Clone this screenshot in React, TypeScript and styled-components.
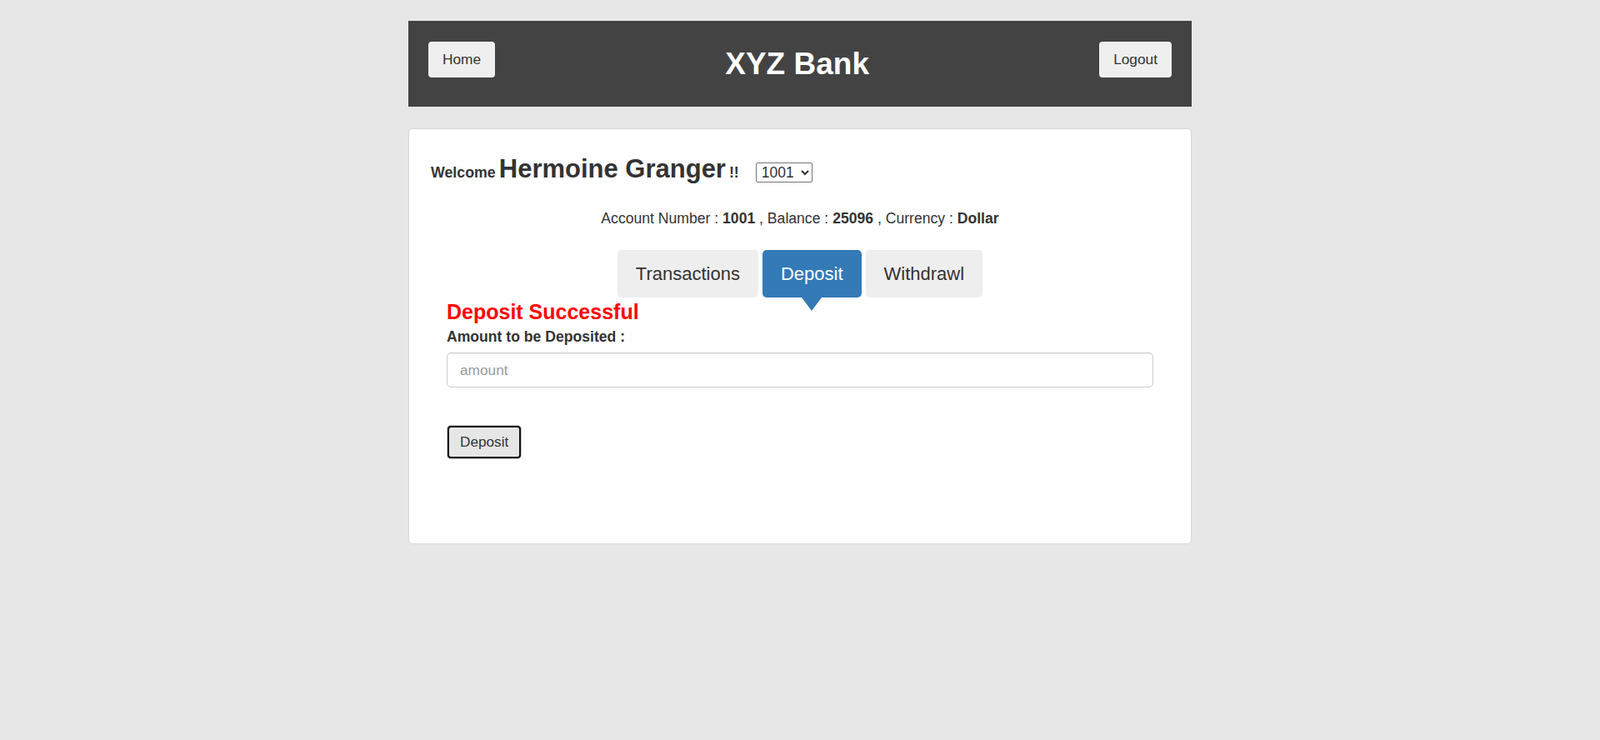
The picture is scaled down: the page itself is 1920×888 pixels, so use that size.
import React from "react";
import styled, { createGlobalStyle } from "styled-components";

const GlobalStyle = createGlobalStyle`
  html, body {
    margin: 0;
    padding: 0;
    background: #e7e7e7;
  }
  body {
    font-family: "Liberation Sans", Arial, Helvetica, sans-serif;
    color: #333;
  }
  * { box-sizing: border-box; }
`;

const Page = styled.div`
  padding-top: 25px;
  min-height: 888px;
`;

const Header = styled.header`
  width: 940px;
  height: 103px;
  margin: 0 auto;
  background: #434343;
  display: flex;
  justify-content: space-between;
  align-items: flex-start;
  padding: 25px 24px 0;
`;

const NavButton = styled.button`
  height: 43px;
  padding: 0 17px;
  border: none;
  border-radius: 4px;
  background: #efefef;
  color: #333;
  font-family: inherit;
  font-size: 17.3px;
  line-height: 43px;
  cursor: pointer;
`;

const Title = styled.h1`
  margin: 5px 0 0;
  font-size: 37px;
  line-height: 43px;
  font-weight: 700;
  color: #fff;
`;

const Card = styled.main`
  width: 940px;
  margin: 26px auto 0;
  background: #fff;
  border: 1px solid #d8d8d8;
  border-radius: 5px;
  padding-bottom: 101.5px;
`;

const WelcomeRow = styled.div`
  display: flex;
  align-items: baseline;
  margin: 29.7px 26px 0;
`;

const Small = styled.span`
  font-size: 17.8px;
  font-weight: 700;
  line-height: 20px;
`;

const UserName = styled.span`
  font-size: 31px;
  font-weight: 700;
  line-height: 36px;
  margin-left: 4px;
`;

const Bang = styled(Small)`
  margin-left: 4px;
`;

const AccountSelect = styled.select`
  margin-left: 20px;
  height: 24px;
  width: 68px;
  font-family: inherit;
  font-size: 17.5px;
  color: #333;
  border: 1px solid #767676;
  border-radius: 2px;
  background: #fff;
  padding: 0 2px;
`;

const AccountInfo = styled.div`
  margin-top: 29.5px;
  text-align: center;
  font-size: 17.6px;
  line-height: 24px;
  b { font-weight: 700; }
`;

const Tabs = styled.nav`
  margin-top: 25.6px;
  display: flex;
  justify-content: center;
  gap: 5px;
`;

const Tab = styled.button<{ $active?: boolean }>`
  position: relative;
  height: 57px;
  padding: 0 22px;
  border: none;
  border-radius: 5px;
  font-family: inherit;
  font-size: 22px;
  line-height: 55px;
  background: ${(p) => (p.$active ? "#337ab7" : "#eeeeee")};
  color: ${(p) => (p.$active ? "#fff" : "#333")};
  cursor: pointer;

  &::after {
    content: "";
    display: ${(p) => (p.$active ? "block" : "none")};
    position: absolute;
    left: 50%;
    top: 100%;
    transform: translateX(-50%);
    width: 0;
    height: 0;
    border-left: 12px solid transparent;
    border-right: 12px solid transparent;
    border-top: 16px solid #337ab7;
  }
`;

const Form = styled.form`
  padding: 0 45px;
  display: flex;
  flex-direction: column;
  align-items: flex-start;
`;

const Message = styled.h3`
  margin: 3.6px 0 0;
  font-size: 25px;
  line-height: 28px;
  font-weight: 700;
  color: #ff0000;
`;

const Label = styled.label`
  margin-top: 5.8px;
  font-size: 17.6px;
  font-weight: 700;
  line-height: 20px;
`;

const AmountInput = styled.input`
  margin-top: 9px;
  align-self: stretch;
  height: 42px;
  padding: 0 15px;
  font-family: inherit;
  font-size: 17.3px;
  color: #555;
  border: 1px solid #cccccc;
  border-radius: 5px;
  box-shadow: inset 0 1px 1px rgba(0, 0, 0, 0.075);
  outline: none;

  &::placeholder {
    color: #999;
  }
`;

const SubmitButton = styled.button`
  margin-top: 46.3px;
  margin-left: 1px;
  height: 39px;
  padding: 0 13px;
  font-family: inherit;
  font-size: 17.2px;
  color: #333;
  background: #e6e6e6;
  border: 2px solid #111;
  border-radius: 4px;
  box-shadow: 0 0 0 1px #c4c4c4;
  cursor: pointer;
`;

export default function App() {
  return (
    <>
      <GlobalStyle />
      <Page>
        <Header>
          <NavButton>Home</NavButton>
          <Title>XYZ Bank</Title>
          <NavButton>Logout</NavButton>
        </Header>
        <Card>
          <WelcomeRow>
            <Small>Welcome</Small>
            <UserName>Hermoine Granger</UserName>
            <Bang>!!</Bang>
            <AccountSelect defaultValue="1001">
              <option value="1001">1001</option>
              <option value="1002">1002</option>
              <option value="1003">1003</option>
            </AccountSelect>
          </WelcomeRow>
          <AccountInfo>
            Account Number : <b>1001</b> , Balance : <b>25096</b> , Currency : <b>Dollar</b>
          </AccountInfo>
          <Tabs>
            <Tab type="button">Transactions</Tab>
            <Tab type="button" $active>
              Deposit
            </Tab>
            <Tab type="button">Withdrawl</Tab>
          </Tabs>
          <Form onSubmit={(e) => e.preventDefault()}>
            <Message>Deposit Successful</Message>
            <Label htmlFor="amount">Amount to be Deposited :</Label>
            <AmountInput id="amount" type="number" placeholder="amount" />
            <SubmitButton type="submit">Deposit</SubmitButton>
          </Form>
        </Card>
      </Page>
    </>
  );
}
